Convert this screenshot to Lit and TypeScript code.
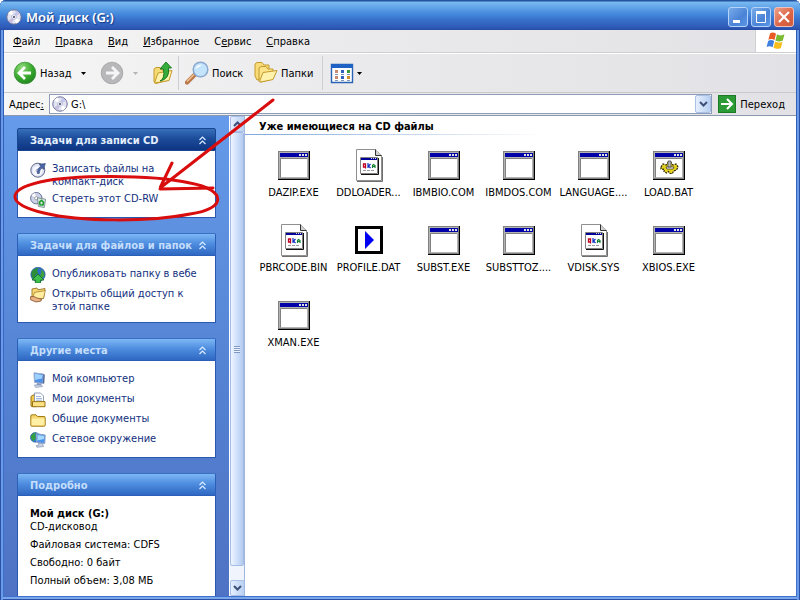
import { LitElement, html, svg, css, nothing, TemplateResult } from "lit";
import { customElement, property } from "lit/decorators.js";

type Art = TemplateResult;

const disc = svg`
  <circle cx="8" cy="8" r="7.2" fill="#e2e4f2" stroke="#6b7096" />
  <path d="M8 8L2 4A7 7 0 0 1 6 1.4Z" fill="#fff" />
  <path d="M8 8L14 11.5A7 7 0 0 1 10 14.6Z" fill="#fff" />
  <path d="M8 8L10 1.5A7 7 0 0 1 14 5Z" fill="#c4c6ea" />
  <path d="M8 8L6 14.6A7 7 0 0 1 2 11.5Z" fill="#c6bfe0" />
  <circle cx="8" cy="8" r="2.4" fill="#f4f4fb" stroke="#9a9dc0" stroke-width=".6" />
  <circle cx="8" cy="8" r="1" fill="#3a3d5c" />`;

const monitor = svg`
  <path d="M4 .8L13.5 2L13 11.5L4.5 10.4Z" fill="#4c8ee8" stroke="#9dacc8" />
  <path d="M5 1.8L12.6 2.9L12.2 6.4L5 8Z" fill="#9cd0ff" />
  <path d="M13.5 2L14.8 2.8L14.2 11.4L13 11.5Z" fill="#4a5a88" />
  <path d="M7 11L11 11.5L11.5 13.2L6.5 12.9Z" fill="#8e9dc0" />
  <path d="M4.5 13L11.5 13L12.4 14.6L5.6 15.4Z" fill="#d6ddea" stroke="#7384aa" stroke-width=".6" />`;

const folder = svg`
  <path d="M.8 13.5V4Q.8 2.8 2 2.8H6L7.5 4.5H14Q15.2 4.5 15.2 5.8V13Q15.2 14.2 14 14.2H2Q.8 14.2.8 13.5Z" fill="#f6d56c" stroke="#a07a14" />
  <path d="M1.6 13.3V7.6Q1.6 6.6 2.6 6.6H13.6Q14.4 6.6 14.4 7.5V13.3Z" fill="#fff0a6" />`;

const globe = svg`
  <circle cx="8" cy="7.5" r="7.2" fill="#2f70c4" stroke="#21518f" stroke-width=".6" />
  <path d="M2 4Q5 .4 8.5 1L7 4L8.5 6L5 8.5L5.4 12L3 12Q.6 8 2 4Z" fill="#2c8f38" />
  <path d="M11 2.2Q15 5 14.4 9L12 11L10 8.2L11.5 5.5Z" fill="#3f9f38" />`;

const icon16: Record<string, Art> = {
  disc,
  monitor,
  folder,
  burn: svg`
    <circle cx="7.8" cy="8.2" r="7" fill="#dfe4f2" stroke="#5d6588" />
    <circle cx="7.4" cy="8.8" r="4.8" fill="#f6f8fd" />
    <circle cx="7.6" cy="8.6" r="1.4" fill="#fff" stroke="#7c84a8" stroke-width=".7" />
    <path d="M7.400 11.500Q7 6.500 10.800 4.400L9.400 2.200L15.400 1.600L13.400 7.400L12.200 5.800Q9.400 7.400 9.200 11.500Z" fill="#4c68a8" stroke="#2c4176" stroke-width=".6" />`,
  erase: svg`
    <circle cx="6.3" cy="6.2" r="5.7" fill="#ccd2e8" stroke="#676e90" />
    <path d="M6 6L1.5 3.5A5 5 0 0 1 5 .9Z" fill="#fff" />
    <circle cx="6.3" cy="6.2" r="1.6" fill="#fff" stroke="#777" stroke-width=".6" />
    <path d="M7.4 5.8L15.6 7.2L14.3 15.5L8.4 14.4Z" fill="#dbeadf" stroke="#6d7f88" stroke-width=".8" />
    <path d="M9.5 10L11.5 8.4L13.5 10.2L13 13L10.1 12.8Z" fill="none" stroke="#1c9a2c" stroke-width="1.6" />`,
  publish: svg`${globe}
    <path d="M8 7L14 13H10.6V16H5.4V13H2Z" fill="#3fc04b" stroke="#146b22" stroke-width=".8" />`,
  share: svg`
    <path d="M2 12V2L7 1L8 2.8L15 1.5L13.500 11.500Z" fill="#f7d774" stroke="#9c7420" stroke-width=".9" />
    <path d="M2 12L4.6 5.4L15.4 3.6L13.400 11.500Z" fill="#ffeea0" stroke="#9c7420" stroke-width=".7" />
    <path d="M.6 9.6H4L7 11L11.5 12L11 14L6 15L.6 12.8Z" fill="#e9b184" stroke="#84502a" stroke-width=".8" />`,
  docs: svg`
    <path d="M1 14V4.5L3 3H6V14.6H2Z" fill="#f0c850" stroke="#977314" />
    <path d="M4.5 1H10.5L13.5 4V12H4.5Z" fill="#fff" stroke="#7a87a8" stroke-width=".8" />
    <path d="M6 4.5H11M6 6.5H12M6 8.2H12" stroke="#86a4d6" stroke-width=".8" />
    <path d="M2.5 9.6H15V14.7H2.5Z" fill="#fbe184" stroke="#977314" />`,
  network: svg`
    <circle cx="5.2" cy="5.4" r="4.8" fill="#2f7fd0" stroke="#1b5591" stroke-width=".6" />
    <path d="M1 4Q3 .6 6 .8L5 3.6L6 6L3.6 9Q.6 7 1 4Z" fill="#35a03c" />
    <path d="M6.500 1.600L15.200 3L14.800 11.500L6.500 10.200Z" fill="#4c92ea" stroke="#8fa2c6" />
    <path d="M7.500 2.900L14.200 4L14 7L7.400 8.600Z" fill="#a4d8ff" />
    <path d="M8.400 11L12.400 11.600L13.500 14.500L7 15.300L6 13.800L9 13Z" fill="#ccd5e6" stroke="#7384aa" stroke-width=".6" />`,
};

const windowArt = svg`
  <path d="M0 1H32V30H0Z" fill="#000" />
  <path d="M0 1H31V29H0Z" fill="#808080" />
  <path d="M1 2H30V28H1Z" fill="#b4b4b4" />
  <path d="M2 3H30V7H2Z" fill="#0000a8" />
  <path d="M21 4H23V6H21ZM24 4H26V6H24ZM27 4H29V6H27Z" fill="#e0e0e0" />
  <path d="M3 9H29V27H3Z" fill="#fff" />
  <path d="M2.500 27.500V8.500H29" fill="none" stroke="#808080" />`;

const fileArt: Record<string, Art> = {
  app: windowArt,
  batch: svg`${windowArt}
    <path d="M8 17L10 14L13 15L15 12.5L18 12.5L20 15L23 14L25 17L23.5 20L20.5 21L19.5 23.5H17L15.5 21.5L13.5 23L11 21.5L11.5 19.5L8 19Z" fill="#e6d21c" stroke="#2a2600" stroke-width="1.2" stroke-dasharray="2 1" />
    <path d="M13 17H21L20 19H14Z" fill="#fff" stroke="#222" stroke-width=".7" />
    <path d="M15 11H18V17H15Z" fill="#bcbcbc" stroke="#444" stroke-width=".8" />`,
  system: svg`
    <path d="M3.5-.5H22.500L28.500 5.500V30.500H3.500Z" fill="#fff" stroke="#909090" />
    <path d="M22.500-.5V5.500H28.500" fill="#d0d0d0" stroke="#333" />
    <path d="M29.500 7V31.500H4" fill="none" stroke="#707070" />
    <path d="M7.500 7.500H24.500V23.500H7.500Z" fill="#fff" stroke="#808080" />
    <path d="M25.500 8V24.500H8" fill="none" stroke="#111" />
    <path d="M8 8H24V10H8Z" fill="#000098" />
    <path d="M18 8.500H24" stroke="#ddd" stroke-dasharray="1 1" />
    <path d="M10.500 14H12.500V17H10.500ZM12.500 17V18.500" fill="none" stroke="#c00020" stroke-width="1.300" />
    <path d="M15 13V18M17.500 14L15.500 16L17.500 18" fill="none" stroke="#1030c0" stroke-width="1.200" />
    <path d="M19.500 18V15.500L20.500 14.500L22 15.500V18M19.500 16.500H22" fill="none" stroke="#108030" stroke-width="1.200" />
    <path d="M10 20.500H22" stroke="#999" stroke-dasharray="3 1" />`,
  play: svg`
    <path d="M3.500 2.500H28.500V27.500H3.500Z" fill="#fff" stroke="#000" stroke-width="3" />
    <path d="M12 6V24L21 15Z" fill="#0000f0" />`,
};

interface Task { icon: string; text: string }

@customElement("task-panel")
export class TaskPanel extends LitElement {
  @property() heading = "";
  @property({ type: Boolean, reflect: true }) primary = false;
  @property({ attribute: false }) tasks: Task[] = [];

  static styles = css`
    :host { display: block; flex: none; }
    .head {
      box-sizing: border-box; width: 100%; height: 23px; padding: 2px 8px 0 12px;
      display: flex; align-items: center; justify-content: space-between;
      border: 1px solid #2b5fb8; border-top-color: #3970c4; border-radius: 2px 2px 0 0;
      background: linear-gradient(#7db7f5, #4f8ee0 45%, #2f68c2);
      color: #c4defc; font: bold 11px/16px "DejaVu Sans Condensed", "Noto Sans", sans-serif;
      white-space: nowrap;
    }
    :host([primary]) .head {
      background: linear-gradient(#3770bc, #1c4c9a 45%, #0e3582);
      border-color: #184690; color: #e4efff;
    }
    .chevrons { width: 9px; height: 9px; flex: none; fill: none; stroke: #d9ebff; stroke-width: 1.2; }
    .body { background: #fff; border: 1px solid #2a58b0; border-top: 0; padding: 11px 12px 9px 12px; }
    ul { list-style: none; margin: 0; padding: 0; display: grid; gap: 4px; }
    a {
      display: grid; grid-template-columns: 16px 1fr; gap: 6px; align-items: start;
      color: #12307e; text-decoration: none;
      font: 11px/13px "DejaVu Sans Condensed", "Noto Sans", sans-serif;
      min-height: 16px;
    }
    a svg { width: 16px; height: 16px; }
  `;

  render() {
    return html`
      <button class="head">${this.heading}
        <svg class="chevrons" viewBox="0 0 9 9"><path d="M1.500 4L4.500 1L7.500 4M1.500 8L4.500 5L7.500 8" /></svg>
      </button>
      <div class="body">
        ${this.tasks.length
          ? html`<ul>${this.tasks.map((t) => html`
              <li><a href="#"><svg viewBox="0 0 16 16">${icon16[t.icon]}</svg><span>${t.text}</span></a></li>`)}</ul>`
          : nothing}
        <slot></slot>
      </div>`;
  }
}

const menus: [string, string, string][] = [
  ["", "Ф", "айл"], ["", "П", "равка"], ["", "В", "ид"],
  ["", "И", "збранное"], ["С", "е", "рвис"], ["", "С", "правка"],
];

const files: [string, string][] = [
  ["DAZIP.EXE", "app"], ["DDLOADER...", "system"], ["IBMBIO.COM", "app"],
  ["IBMDOS.COM", "app"], ["LANGUAGE....", "app"], ["LOAD.BAT", "batch"],
  ["PBRCODE.BIN", "system"], ["PROFILE.DAT", "play"], ["SUBST.EXE", "app"],
  ["SUBSTTOZ....", "app"], ["VDISK.SYS", "system"], ["XBIOS.EXE", "app"],
  ["XMAN.EXE", "app"],
];

const caret = html`<svg class="caret" viewBox="0 0 5 3"><path d="M0 0H5L2.500 3Z" fill="currentColor" /></svg>`;

const folders = svg`
  <path d="M1 15V3L3 1.500H8L10 4H15V17L3 19Z" fill="#f8dc78" stroke="#c49a2c" />
  <path d="M5 20.500V7L7 5.500H12L14 8H19V18L7 21Z" fill="#fbe38a" stroke="#c49a2c" />
  <path d="M5.500 20.500L9 11.500L23 9.500L19 18.500L7 21Z" fill="#fff2ac" stroke="#c49a2c" />`;

@customElement("app-root")
export class AppRoot extends LitElement {
  static styles = css`
    :host {
      display: flex; flex-direction: column; box-sizing: border-box; position: relative;
      height: 100vh; overflow: hidden; padding: 0 4px 4px; border-radius: 6px 6px 0 0;
      background: linear-gradient(#2c5cb6, #3d72cc);
      box-shadow: inset 1px 0 #2a51a8, inset 3px 0 #6b9ae8, inset -1px 0 #2a51a8, inset -3px 0 #6b9ae8, inset 0 -1px #2a51a8, inset 0 -3px #7ba6ea;
      font: 11px/13px "DejaVu Sans Condensed", "Noto Sans", sans-serif; color: #000;
    }
    button { font: inherit; color: inherit; margin: 0; padding: 0; border: 0; background: none; }
    .titlebar {
      flex: none; height: 30px; margin: 0 -4px; padding: 3px 6px 0 6px; box-sizing: border-box;
      display: flex; align-items: center; gap: 4px;
      background: linear-gradient(#23529f 0, #23529f 1px, #79baf2 2px, #68aaea 6px, #4489dc 14px, #3770cb 20px, #2d58b5 28px, #274ba4 30px);
    }
    .titlebar svg { width: 16px; height: 16px; }
    h1 { flex: 1; margin: 0; font: 600 13px/18px "Noto Sans", sans-serif; color: #fff; text-shadow: 1px 1px 1px #153b85; }
    .controls { display: flex; gap: 3px; }
    .controls button {
      width: 20px; height: 20px; box-sizing: border-box; border: 1px solid #b5d2f8; border-radius: 3px;
      background: linear-gradient(135deg, #78abea, #4a83d6 60%, #5a96e6); display: grid; place-items: center;
    }
    .controls .close { background: linear-gradient(135deg, #eda08a, #dc6242 60%, #cf5a3c); border-color: #efc1bc; }
    .controls svg { width: 18px; height: 18px; fill: none; stroke: #fff; }
    .menubar {
      flex: none; display: flex; align-items: stretch; justify-content: space-between; height: 22px;
      background: linear-gradient(90deg, #f6f6f6, #ebebed 40%, #e2e1e5); border-bottom: 1px solid #cfcfd2;
    }
    .menus { display: flex; gap: 15px; padding-left: 9px; align-items: center; }
    .flag { width: 40px; background: #fff; border-left: 1px solid #d0d0d4; display: grid; place-items: center; }
    .flag svg { width: 20px; height: 20px; }
    .toolbar {
      flex: none; box-sizing: border-box; height: 40px; display: flex; align-items: center; padding: 0 9px;
      background: linear-gradient(90deg, #f6f6f6, #ebebed 40%, #e2e1e5);
      border-top: 1px solid #fff; border-bottom: 1px solid #c9c9cc;
    }
    .toolbar button { display: flex; align-items: center; gap: 3px; white-space: nowrap; }
    .toolbar svg { width: 24px; height: 24px; flex: none; }
    .toolbar svg.caret { width: 5px; height: 3px; }
    .back { width: 75px; }
    .back .caret { margin-left: 6px; }
    .forward { width: 51px; margin-left: 12px; color: #b4b4b8; }
    .forward .caret { margin-left: 6px; }
    .split { width: 1px; height: 34px; background: #cdcdd2; }
    .up { margin-right: 3px; }
    .search { margin-left: 6px; width: 60px; }
    .folders { margin: 0 8px 0 9px; width: 60px; }
    .views { margin-left: 7px; }
    .address {
      flex: none; height: 22px; display: flex; align-items: center; gap: 6px;
      background: linear-gradient(90deg, #f6f6f6, #ebebed 40%, #e2e1e5); padding: 0 11px 0 5px;
    }
    .address label { width: 34px; }
    .field {
      flex: 1; min-width: 0; height: 20px; box-sizing: border-box; display: flex; align-items: center;
      background: #fff; border: 1px solid #8e9db8; padding-left: 2px; gap: 3px;
    }
    .field svg { width: 16px; height: 16px; }
    .field input { flex: 1; min-width: 0; border: 0; padding: 0; outline: 0; font: inherit; background: none; }
    .drop, .scroll button {
      box-sizing: border-box; width: 16px; height: 18px; flex: none; border: 1px solid #a9bfe4; border-radius: 2px;
      background: linear-gradient(90deg, #e5effe, #b9d0f2); display: grid; place-items: center;
    }
    .field .drop svg, .scroll button svg { width: 9px; height: 6px; fill: none; stroke: #3d5078; stroke-width: 2; }
    .go { display: flex; align-items: center; gap: 4px; }
    .go svg { width: 18px; height: 18px; }
    .main {
      flex: 1; min-height: 0; display: grid; grid-template-columns: 225px 15px 1fr;
      border-top: 1px solid #8d99b0; background: #fff; overflow: hidden;
    }
    .side {
      min-height: 0; overflow: hidden; box-sizing: border-box; padding: 12px 13px 0;
      display: flex; flex-direction: column; gap: 15px;
      background: linear-gradient(#659bea, #5380d0 60%, #4f72c4);
    }
    .side task-panel:last-child { flex: 1 0 auto; }
    .details { display: grid; gap: 5px; color: #000; padding-bottom: 24px; }
    .details p { margin: 0; }
    .scroll { display: flex; flex-direction: column; background: #eff4fd; border-left: 1px solid #fff; box-sizing: border-box; }
    .scroll button { width: 15px; height: 16px; }
    .thumb {
      flex: 1; margin-bottom: 14px; border: 1px solid #a4bce4; border-radius: 2px; display: grid; place-items: center;
      background: linear-gradient(90deg, #eef5ff, #c9dcf9 60%, #b4caee);
    }
    .grip { width: 6px; height: 7px; background: repeating-linear-gradient(#7f98c2 0, #7f98c2 1px, #eef4ff 1px, #eef4ff 2px); }
    .files { min-width: 0; border-left: 1px solid #9fb6de; }
    h2 { margin: 0; padding: 4px 14px 1px; font: bold 11px/13px "DejaVu Sans Condensed", "Noto Sans", sans-serif; }
    .rule { height: 1px; width: 300px; max-width: 100%; background: linear-gradient(90deg, #7fa6dc, #fff); }
    .grid { display: grid; grid-template-columns: repeat(auto-fill, 75px); grid-auto-rows: 75px; padding: 15px 24px 0 11px; }
    .file { display: flex; flex-direction: column; align-items: center; gap: 5px; color: #000; text-decoration: none; white-space: nowrap; }
    .file svg { width: 32px; height: 31px; overflow: visible; }
    .marks { position: absolute; left: 0; top: 0; width: 290px; height: 230px; pointer-events: none; fill: none; stroke: #d90d0d; stroke-width: 3; stroke-linecap: round; }
  `;

  render() {
    return html`
      <header class="titlebar">
        <svg viewBox="0 0 16 16">${disc}</svg>
        <h1>Мой диск (G:)</h1>
        <div class="controls">
          <button aria-label="Свернуть"><svg viewBox="0 0 18 18"><path d="M4 13.500H11" stroke-width="3" /></svg></button>
          <button aria-label="Развернуть"><svg viewBox="0 0 18 18"><path d="M4 4.500H14" stroke-width="3" /><path d="M4.500 4V14.500H13.500V4" /></svg></button>
          <button class="close" aria-label="Закрыть"><svg viewBox="0 0 18 18"><path d="M4 4L14 14M14 4L4 14" stroke-width="2.200" /></svg></button>
        </div>
      </header>

      <div class="menubar">
        <nav class="menus">${menus.map(([a, key, b]) => html`<button>${a}<u>${key}</u>${b}</button>`)}</nav>
        <div class="flag"><svg viewBox="0 0 20 20">
          <path d="M4 2.500Q7 .5 10 2.800L8.500 9Q5.500 7 2.400 8.800Z" fill="#ea5a24" />
          <path d="M11 3.300Q14.500 5.500 18.500 3.300L16.800 9.600Q13 11.500 9.400 9.400Z" fill="#7bbb32" />
          <path d="M2.100 9.900Q5.200 8 8.200 10L6.600 16.200Q3.600 14.200.6 16Z" fill="#3f7fe0" />
          <path d="M9.100 10.500Q12.800 12.600 16.500 10.700L14.900 16.900Q11 18.800 7.500 16.700Z" fill="#f7bd1d" />
        </svg></div>
      </div>

      <div class="toolbar">
        <button class="back">
          <svg viewBox="0 0 24 24"><defs><radialGradient id="g" cx=".35" cy=".25" r=".8"><stop offset="0" stop-color="#8fdb78" /><stop offset=".6" stop-color="#39a82e" /><stop offset="1" stop-color="#1f8420" /></radialGradient></defs>
            <circle cx="12" cy="12" r="10.800" fill="url(#g)" stroke="#3c9238" stroke-width=".8" />
            <path d="M12 6L6 12L12 18M6.500 12H18" fill="none" stroke="#fff" stroke-width="2.800" /></svg>
          Назад ${caret}
        </button>
        <button class="forward" aria-label="Вперед">
          <svg viewBox="0 0 24 24"><circle cx="12" cy="12" r="10.800" fill="#b8b8ba" stroke="#a2a2a4" stroke-width=".8" />
            <path d="M12 6L18 12L12 18M17.500 12H6" fill="none" stroke="#f6f6f6" stroke-width="2.800" /></svg>
          ${caret}
        </button>
        <button class="up" aria-label="Вверх">
          <svg viewBox="0 0 24 24">
            <path d="M3 21V8L5 6.500H9L11 9H18V19L5 22.500Z" fill="#f6da76" stroke="#c49a2c" />
            <path d="M3.500 22L7 12L21 9.500L18 19.500Z" fill="#fff2ac" stroke="#c49a2c" />
            <path d="M9 20Q14 18 12.500 8H9L15 1L20.500 7H17.500Q19 18 9 20Z" fill="#36ad3a" stroke="#16711d" stroke-width=".9" /></svg>
        </button>
        <span class="split"></span>
        <button class="search">
          <svg viewBox="0 0 24 24"><path d="M2 21.500L10 13.500" stroke="#b9784a" stroke-width="4.400" stroke-linecap="round" /><path d="M2 20.500L9 13.500" stroke="#efbd90" stroke-width="1.600" />
            <circle cx="15.500" cy="8.500" r="7.300" fill="#c4e4fb" stroke="#8ba8d0" stroke-width="1.500" /><path d="M10.500 8Q12 3.500 17 3.800Q14 6 10.500 8Z" fill="#fff" /></svg>
          Поиск
        </button>
        <button class="folders"><svg viewBox="0 0 24 24">${folders}</svg>Папки</button>
        <span class="split"></span>
        <button class="views" aria-label="Вид">
          <svg viewBox="0 0 24 24"><path d="M1.500 3.500H22.500V21.500H1.500Z" fill="#fff" stroke="#2a62b4" stroke-width="1.400" /><path d="M1 3H23V7H1Z" fill="#1f62c4" />
            <path d="M5 9H8V12H5ZM5 15H8V18H5Z" fill="#c98a72" /><path d="M11 9H14V12H11ZM11 15H14V18H11Z" fill="#2f62c0" /><path d="M17 9H20V12H17Z" fill="#3a9a3a" /><path d="M17 15H20V18H17Z" fill="#d28a2a" />
            <path d="M5 13.500H8M11 13.500H14M17 13.500H20M5 19.500H8M11 19.500H14M17 19.500H20" stroke="#7f96bc" /></svg>
          ${caret}
        </button>
      </div>

      <div class="address">
        <label for="path">Адрес<u>:</u></label>
        <div class="field">
          <svg viewBox="0 0 16 16">${disc}</svg>
          <input id="path" value="G:\\" />
          <button class="drop" aria-label="Список адресов"><svg viewBox="0 0 9 6"><path d="M1 1L4.500 4.500L8 1" /></svg></button>
        </div>
        <button class="go"><svg viewBox="0 0 18 18"><path d="M0 0H18V18H0Z" fill="#2b9a34" /><path d="M.5.5H17.500V17.500H.5Z" fill="none" stroke="#1c7a26" /><path d="M9 4L14 9L9 14M14 9H3" fill="none" stroke="#fff" stroke-width="2" /></svg>Переход</button>
      </div>

      <div class="main">
        <aside class="side">
          <task-panel primary heading="Задачи для записи CD" .tasks=${[
            { icon: "burn", text: "Записать файлы на компакт-диск" },
            { icon: "erase", text: "Стереть этот CD-RW" },
          ]}></task-panel>
          <task-panel heading="Задачи для файлов и папок" .tasks=${[
            { icon: "publish", text: "Опубликовать папку в вебе" },
            { icon: "share", text: "Открыть общий доступ к этой папке" },
          ]}></task-panel>
          <task-panel heading="Другие места" .tasks=${[
            { icon: "monitor", text: "Мой компьютер" },
            { icon: "docs", text: "Мои документы" },
            { icon: "folder", text: "Общие документы" },
            { icon: "network", text: "Сетевое окружение" },
          ]}></task-panel>
          <task-panel heading="Подробно">
            <div class="details">
              <p><b>Мой диск (G:)</b><br />CD-дисковод</p>
              <p>Файловая система: CDFS</p>
              <p>Свободно: 0 байт</p>
              <p>Полный объем: 3,08 МБ</p>
            </div>
          </task-panel>
        </aside>
        <div class="scroll">
          <button aria-label="Прокрутить вверх"><svg viewBox="0 0 9 6"><path d="M1 5L4.500 1.500L8 5" /></svg></button>
          <div class="thumb"><span class="grip"></span></div>
          <button aria-label="Прокрутить вниз"><svg viewBox="0 0 9 6"><path d="M1 1L4.500 4.500L8 1" /></svg></button>
        </div>
        <section class="files">
          <h2>Уже имеющиеся на CD файлы</h2>
          <div class="rule"></div>
          <div class="grid">${files.map(([name, kind]) => html`
            <a class="file" href="#"><svg viewBox="0 0 32 31">${fileArt[kind]}</svg>${name}</a>`)}</div>
        </section>
      </div>

      <svg class="marks" viewBox="0 0 290 230">
        <path d="M40 182C70 175 150 174 190 183C227 190 227 209 190 214C150 222 80 222 44 213C6 204 6 190 40 182Z" />
        <path d="M273 100L160 188L172 163M160 189L213 188" />
      </svg>`;
  }
}
